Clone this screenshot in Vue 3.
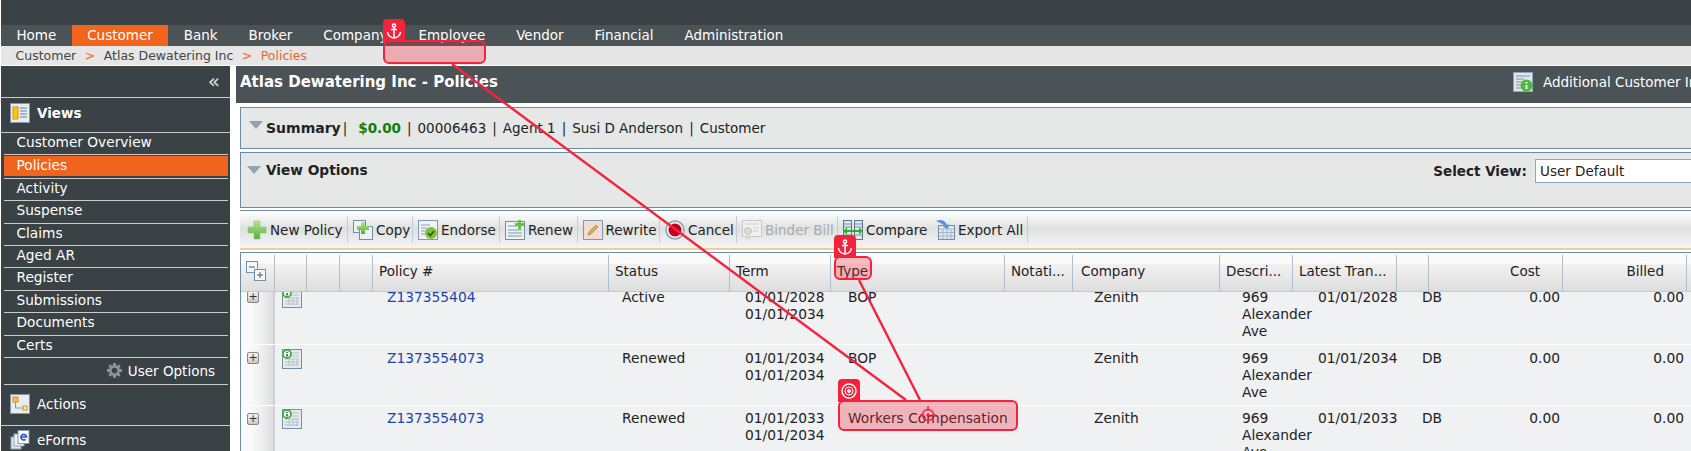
<template>
  <div class="page">
    <svg class="defs" width="0" height="0">
      <defs>
        <linearGradient id="gPlus" x1="0" y1="0" x2="0" y2="1">
          <stop offset="0" stop-color="#b6e58c" />
          <stop offset="1" stop-color="#5aae3c" />
        </linearGradient>
        <symbol id="i-views" viewBox="0 0 20 20">
          <rect x="0.5" y="0.5" width="19" height="19" fill="#e8edf1" stroke="#7d98b0" />
          <rect x="3" y="4" width="5" height="12" fill="#f8c810" stroke="#e88a10" />
          <path d="M10 5h7M10 8h7M10 11h7M10 14h7" stroke="#8ea3b5" stroke-width="1.4" />
        </symbol>
        <symbol id="i-actions" viewBox="0 0 20 20">
          <rect x="0.5" y="0.5" width="19" height="19" fill="#e8edf1" stroke="#7d98b0" />
          <rect x="3" y="3" width="5" height="5" fill="#f4c430" stroke="#d0901a" />
          <rect x="13" y="12" width="4" height="4" fill="#fbe9a8" stroke="#d0901a" />
          <path d="M5.500 8v6h7" fill="none" stroke="#7d98b0" />
        </symbol>
        <symbol id="i-eforms" viewBox="0 0 20 20">
          <rect x="1" y="7" width="10" height="12" fill="#dfe6ec" stroke="#8ea3b5" />
          <rect x="4" y="4" width="10" height="12" fill="#eef2f5" stroke="#8ea3b5" />
          <rect x="8" y="0.500" width="11" height="13" fill="#fff" stroke="#7d98b0" />
          <path d="M11 7h5.500a2.800 2.800 0 1 0-1 2.300" fill="none" stroke="#2a4fd0" stroke-width="1.600" />
        </symbol>
        <symbol id="i-plus" viewBox="0 0 20 20">
          <path d="M7 1h6v6h6v6h-6v6H7v-6H1V7h6z" fill="url(#gPlus)" stroke="#8cc878" stroke-width="0.600" />
        </symbol>
        <symbol id="i-copy" viewBox="0 0 20 20">
          <rect x="0.500" y="0.500" width="12" height="12" fill="#eef2f5" stroke="#6f8fab" />
          <rect x="6.500" y="6.500" width="13" height="13" fill="#eef2f5" stroke="#6f8fab" />
          <path d="M8 2h4v4h4v4h-4v4H8v-4H4V6h4z" fill="url(#gPlus)" />
        </symbol>
        <symbol id="i-endorse" viewBox="0 0 20 20">
          <rect x="0.500" y="0.500" width="19" height="19" fill="#eef2f5" stroke="#7d98b0" />
          <path d="M3 5h9M3 8h6M3 11h4M3 14h4" stroke="#8ea3b5" />
          <circle cx="13" cy="13" r="6" fill="#7fbf3a" />
          <path d="M10 13l2.300 2.500L16 11" fill="none" stroke="#1d5e18" stroke-width="1.500" />
        </symbol>
        <symbol id="i-renew" viewBox="0 0 20 20">
          <rect x="0.500" y="1.500" width="19" height="18" fill="#eef2f5" stroke="#6f8fab" />
          <path d="M3 6h9M3 10h14M3 13h14M3 16h14" stroke="#7d98b0" />
          <path d="M13 0h3v3h3v3h-3v3h-3V6h-3V3h3z" fill="#63c23e" />
        </symbol>
        <symbol id="i-rewrite" viewBox="0 0 20 20">
          <rect x="0.500" y="0.500" width="19" height="19" fill="#f3dcd6" stroke="#7d98b0" />
          <path d="M5 15l1-3 7-7 2 2-7 7z" fill="#d8b060" stroke="#8a6a30" stroke-width="0.600" />
        </symbol>
        <symbol id="i-cancel" viewBox="0 0 20 20">
          <circle cx="10" cy="10" r="9" fill="#eef2f5" stroke="#8ea3b5" stroke-width="1.500" />
          <circle cx="10" cy="10" r="6.500" fill="#c40018" />
        </symbol>
        <symbol id="i-binder" viewBox="0 0 20 20">
          <rect x="0.500" y="0.500" width="19" height="16" fill="#f2f2f2" stroke="#c8c8c8" />
          <path d="M3 4h14M11 8h6M11 11h6" stroke="#d0d0d0" />
          <circle cx="6" cy="11" r="3.500" fill="#dcdcdc" stroke="#c4c4c4" />
          <path d="M4 14v6l2-1.500L8 20v-6" fill="#d8d8d8" />
        </symbol>
        <symbol id="i-compare" viewBox="0 0 20 20">
          <rect x="0.500" y="0.500" width="8" height="19" fill="#dfe6ec" stroke="#56758f" />
          <rect x="11.500" y="0.500" width="8" height="19" fill="#dfe6ec" stroke="#56758f" />
          <path d="M1 4h7M1 7h7M12 4h7M12 7h7M1 15h7M12 15h7" stroke="#7d93a8" />
          <path d="M0 11l4-3.500V10h12V7.500l4 3.500-4 3.500V12H4v2.500z" fill="#30b020" />
        </symbol>
        <symbol id="i-export" viewBox="0 0 20 20">
          <rect x="3.500" y="5.500" width="16" height="14" fill="#dde5ee" stroke="#6f8fab" />
          <path d="M4 9h15M4 12.500h15M4 16h15M8 9v10M12 9v10M16 9v10" stroke="#a7b8c8" />
          <path d="M1 1c4-2 9-1 11 4l2-1-1 5-5-2 2-1C8 3.500 4 2.500 1 1z" fill="#5c8fd8" />
        </symbol>
        <symbol id="i-policy" viewBox="0 0 20 20">
          <rect x="0.500" y="0.500" width="19" height="19" fill="#e8ebee" stroke="#6f8fab" />
          <path d="M9 4h8M9 7h8M3 10h14M3 13h14M3 16h14M7 10v7M11 10v7M15 10v7" stroke="#b6bfc8" />
          <circle cx="5" cy="5" r="4" fill="#fff" stroke="#3cb43c" stroke-width="1.800" />
          <path d="M5 3v1M5 5v2.500" stroke="#1a4a1a" stroke-width="1.400" />
        </symbol>
        <symbol id="i-info" viewBox="0 0 20 20">
          <rect x="0.500" y="0.500" width="19" height="19" fill="#dfe6ec" stroke="#8ea3b5" />
          <path d="M3 4h14M3 7h8M3 10h6M3 13h6M3 16h5" stroke="#7d93a8" />
          <circle cx="13.500" cy="13.500" r="6" fill="#4cb83c" />
          <path d="M13.500 10v1.500M13.500 13v4" stroke="#fff" stroke-width="1.800" />
        </symbol>
        <symbol id="i-expand" viewBox="0 0 20 20">
          <rect x="0.500" y="0.500" width="11" height="11" fill="#f4f6f8" stroke="#6f8fab" />
          <path d="M3 6h6" stroke="#556" />
          <rect x="8.500" y="8.500" width="11" height="11" fill="#f4f6f8" stroke="#6f8fab" />
          <path d="M11 14h6M14 11v6" stroke="#556" />
        </symbol>
        <symbol id="i-gear" viewBox="0 0 16 16">
          <path d="M6.500 0h3v2.500l1.500.6L12.700 1.400l2 2L13 5l.6 1.500H16v3h-2.400L13 11l1.700 1.600-2 2L11 13l-1.500.6V16h-3v-2.400L5 13l-1.700 1.600-2-2L3 11l-.6-1.500H0v-3h2.400L3 5 1.300 3.400l2-2L5 3.100l1.500-.6z" fill="#8d9496" />
          <circle cx="8" cy="8" r="3" fill="#3a4245" />
        </symbol>
        <symbol id="anchor" viewBox="0 0 16 16">
          <g fill="none" stroke="#fff" stroke-width="1.500">
            <circle cx="8" cy="2.600" r="1.600" />
            <path d="M8 4.200V15M5 6.500h6M1.500 9c.5 3.500 3 5.500 6.500 6 3.500-.5 6-2.500 6.500-6" />
          </g>
        </symbol>
      </defs>
    </svg>

    <div class="topbar"></div>
    <nav class="nav">
      <a v-for="item in navItems" :key="item" class="nav-item" :class="{ active: item === 'Customer' }">{{ item }}</a>
    </nav>
    <div class="crumbs">
      <span>Customer</span><span class="sep">&gt;</span><span>Atlas Dewatering Inc</span><span class="sep">&gt;</span><span class="current">Policies</span>
    </div>

    <div class="layout">
      <aside class="sidebar">
        <div class="collapse">«</div>
        <div class="section views">
          <svg class="ico20"><use href="#i-views" /></svg>
          <b>Views</b>
        </div>
        <ul class="menu">
          <li v-for="item in menuItems" :key="item" :class="{ active: item === 'Policies' }"><span>{{ item }}</span></li>
        </ul>
        <div class="user-options">
          <svg class="gear"><use href="#i-gear" /></svg>
          User Options
        </div>
        <div class="section actions">
          <svg class="ico20"><use href="#i-actions" /></svg>
          <span>Actions</span>
        </div>
        <div class="section eforms">
          <svg class="ico20"><use href="#i-eforms" /></svg>
          <span>eForms</span>
        </div>
      </aside>

      <main class="main">
        <header class="title-bar">
          <h1>Atlas Dewatering Inc - Policies</h1>
          <div class="additional">
            <svg class="ico20"><use href="#i-info" /></svg>
            <span>Additional Customer Information</span>
          </div>
        </header>

        <section class="panel summary">
          <span class="tri"></span>
          <b class="summary-label">Summary</b>
          <span class="bar first-bar">|</span>
          <b class="money">$0.00</b>
          <span class="bar">|</span>
          <span>00006463</span>
          <span class="bar">|</span>
          <span>Agent 1</span>
          <span class="bar">|</span>
          <span>Susi D Anderson</span>
          <span class="bar">|</span>
          <span>Customer</span>
        </section>

        <section class="panel options">
          <div class="options-left">
            <span class="tri"></span>
            <b>View Options</b>
          </div>
          <div class="select-view">
            <b>Select View:</b>
            <div class="select-box">User Default</div>
          </div>
        </section>

        <div class="toolbar">
          <div v-for="tool in tools" :key="tool.label" class="tool" :class="{ disabled: tool.disabled }">
            <svg class="ico20"><use :href="'#i-' + tool.icon" /></svg>
            <span>{{ tool.label }}</span>
          </div>
        </div>

        <div class="grid">
          <div class="grid-head grid-cols">
            <div v-for="(col, i) in columns" :key="i" class="hcell" :class="col.cls">
              <svg v-if="i === 0" class="expand"><use href="#i-expand" /></svg>
              {{ col.label }}
            </div>
          </div>
          <div class="grid-body">
            <div v-for="row in rows" :key="row.term1" class="grid-row grid-cols">
              <div class="cell first"><span class="plus-box">+</span></div>
              <div class="cell"><svg class="ico20 doc"><use href="#i-policy" /></svg></div>
              <div class="cell"></div>
              <div class="cell"></div>
              <div class="cell policy"><a>{{ row.policy }}</a></div>
              <div class="cell status">{{ row.status }}</div>
              <div class="cell term">{{ row.term1 }}<br />{{ row.term2 }}</div>
              <div class="cell type">{{ row.type }}</div>
              <div class="cell"></div>
              <div class="cell company">Zenith</div>
              <div class="cell desc">969<br />Alexander<br />Ave</div>
              <div class="cell latest">{{ row.latest }}</div>
              <div class="cell db">DB</div>
              <div class="cell num">0.00</div>
              <div class="cell num">0.00</div>
              <div class="cell"></div>
            </div>
          </div>
        </div>
      </main>
    </div>

    <!-- red annotation layer on top of the page -->
    <svg class="lines" width="1691" height="451">
      <path d="M452 64L906 400M859 280L920 400" stroke="#f4233c" stroke-width="2.400" fill="none" />
    </svg>
    <div class="mark mark-a"><span class="flag"><svg width="16" height="16"><use href="#anchor" /></svg></span></div>
    <div class="mark mark-b"><span class="flag"><svg width="16" height="16"><use href="#anchor" /></svg></span></div>
    <div class="mark mark-c">
      <span class="flag">
        <svg width="16" height="16" viewBox="0 0 16 16" fill="none" stroke="#fff">
          <circle cx="8" cy="8" r="7" stroke-width="1.400" />
          <circle cx="8" cy="8" r="4" />
          <circle cx="8" cy="8" r="1.500" fill="#fff" />
        </svg>
      </span>
      <svg class="cross" width="16" height="20" viewBox="0 0 16 20" fill="none" stroke="#f4233c" stroke-width="1.400">
        <circle cx="8" cy="10" r="5.500" />
        <path d="M8 1v5M8 14v5M0 10h4M12 10h4" />
        <circle cx="8" cy="10" r="1" fill="#f4233c" />
      </svg>
    </div>
  </div>
</template>

<script setup>
const navItems = ['Home', 'Customer', 'Bank', 'Broker', 'Company', 'Employee', 'Vendor', 'Financial', 'Administration']

const menuItems = ['Customer Overview', 'Policies', 'Activity', 'Suspense', 'Claims', 'Aged AR', 'Register', 'Submissions', 'Documents', 'Certs']

const tools = [
  { label: 'New Policy', icon: 'plus' },
  { label: 'Copy', icon: 'copy' },
  { label: 'Endorse', icon: 'endorse' },
  { label: 'Renew', icon: 'renew' },
  { label: 'Rewrite', icon: 'rewrite' },
  { label: 'Cancel', icon: 'cancel' },
  { label: 'Binder Bill', icon: 'binder', disabled: true },
  { label: 'Compare', icon: 'compare' },
  { label: 'Export All', icon: 'export' }
]

const columns = [
  { label: '', cls: 'expand-cell' },
  { label: '' },
  { label: '' },
  { label: '' },
  { label: 'Policy #' },
  { label: 'Status' },
  { label: 'Term' },
  { label: 'Type' },
  { label: 'Notati...' },
  { label: 'Company', cls: 'wide-pad' },
  { label: 'Descri...' },
  { label: 'Latest Tran...' },
  { label: '' },
  { label: 'Cost', cls: 'right' },
  { label: 'Billed', cls: 'right' },
  { label: '' }
]

const rows = [
  { policy: 'Z137355404', status: 'Active', term1: '01/01/2028', term2: '01/01/2034', type: 'BOP', latest: '01/01/2028' },
  { policy: 'Z1373554073', status: 'Renewed', term1: '01/01/2034', term2: '01/01/2034', type: 'BOP', latest: '01/01/2034' },
  { policy: 'Z1373554073', status: 'Renewed', term1: '01/01/2033', term2: '01/01/2034', type: 'Workers Compensation', latest: '01/01/2033' }
]
</script>

<style>
html, body {
  margin: 0;
  background: #fff;
  overflow: hidden;
}
</style>

<style scoped>
* {
  box-sizing: border-box;
}

.page {
  position: relative;
  width: 1691px;
  height: 451px;
  overflow: hidden;
  font-family: "DejaVu Sans", sans-serif;
  font-size: 13.500px;
  color: #222;
  background: #fff;
  padding-left: 1px;
}

.defs {
  position: absolute;
}

.ico20 {
  width: 20px;
  height: 20px;
  flex: none;
}

.topbar {
  height: 25px;
  background: #3a4245;
}

.nav {
  display: flex;
  height: 21px;
  background: #4b5356;
  align-items: center;
}

.nav-item {
  height: 100%;
  padding: 0 15.450px;
  line-height: 21px;
  color: #fff;
}

.nav-item.active {
  background: #f0641e;
}

.crumbs {
  display: flex;
  height: 19px;
  margin-bottom: 1px;
  padding-left: 14.500px;
  align-items: center;
  background: #e6e6e6;
  color: #444;
  font-size: 12.500px;
}

.crumbs .sep {
  margin: 0 8.500px;
  color: #f0641e;
}

.crumbs .current {
  color: #f0641e;
}

.layout {
  display: flex;
  height: 385px;
}

.sidebar {
  flex: none;
  width: 229px;
  background: #3a4245;
  color: #fff;
}

.collapse {
  height: 32px;
  padding-right: 10px;
  border-bottom: 1px solid #ccc;
  text-align: right;
  font-size: 20px;
  line-height: 30px;
  color: #ddd;
}

.section {
  display: flex;
  align-items: center;
  gap: 7px;
  height: 34px;
  padding-left: 9px;
}

.section.views {
  padding-bottom: 4px;
}

.menu {
  margin: 0;
  padding: 0;
  list-style: none;
  border-top: 1px solid #ccc;
  font-size: 13.700px;
}

.menu li {
  height: 22.400px;
  margin: 0 2px 0 3px;
  border-bottom: 1px solid #ccc;
}

.menu li span {
  display: block;
  height: 19px;
  padding-left: 12.500px;
  line-height: 19px;
}

.menu li.active span {
  height: 20px;
  margin-top: 1px;
  background: #f0641e;
}

.user-options {
  display: flex;
  justify-content: flex-end;
  align-items: center;
  gap: 5px;
  height: 27px;
  margin: 0 2px 0 3px;
  padding-right: 13px;
  border-bottom: 1px solid #ccc;
}

.gear {
  width: 15px;
  height: 15px;
  margin-right: 1px;
}

.actions {
  height: 41px;
  padding-bottom: 2px;
  border-bottom: 1px solid #ccc;
}

.eforms {
  height: 28px;
}

.main {
  flex: 1;
  min-width: 0;
  margin-left: 6px;
}

.title-bar {
  display: flex;
  justify-content: space-between;
  align-items: center;
  height: 37px;
  padding: 0 0 6px 4px;
  background: #4b5356;
  color: #fff;
  white-space: nowrap;
}

.title-bar h1 {
  margin: 0;
  font-size: 15px;
  font-weight: 700;
}

.additional {
  display: flex;
  align-items: center;
  gap: 10px;
  margin-right: -72px;
}

.panel {
  margin: 4px -20px 0 4px;
  border: 1px solid #6e8ba6;
  background: #e6e7e7;
}

.summary {
  display: flex;
  align-items: center;
  height: 42px;
  padding-left: 8px;
}

.tri {
  display: inline-block;
  width: 0;
  height: 0;
  border-left: 7px solid transparent;
  border-right: 7px solid transparent;
  border-top: 8px solid #8ea3b5;
}

.summary .tri {
  margin-bottom: 6px;
}

.summary-label {
  margin-left: 3px;
  font-size: 14px;
}

.bar {
  margin: 0 6px;
}

.first-bar {
  margin-left: 2px;
}

.money {
  margin-left: 5px;
  color: #0c800c;
}

.options {
  display: flex;
  justify-content: space-between;
  height: 56px;
  margin-top: 3px;
  padding-left: 6px;
}

.options-left {
  display: flex;
  align-items: center;
  gap: 5px;
  height: 34px;
}

.options-left b {
  font-size: 13.700px;
}

.select-view {
  display: flex;
  align-items: center;
  gap: 8px;
  height: 36px;
  margin-right: -125px;
}

.select-box {
  width: 300px;
  height: 24px;
  padding-left: 4px;
  line-height: 22px;
  border: 1px solid #8fa5b8;
  background: #fff;
}

.toolbar {
  display: grid;
  grid-template-columns: 104px 65px 87px 77.500px 82.500px 77px 101px 92px 98px;
  height: 40px;
  margin: 2px -20px 0 4px;
  padding: 5px 0 5px 4px;
  border-top: 1px solid #6e8ba6;
  border-bottom: 2px solid #efcf95;
  background: linear-gradient(#fff, #dfe1e1 48%, #f4f4f4);
}

.tool {
  display: flex;
  align-items: center;
  gap: 3px;
  padding-left: 5px;
  border-right: 1px solid #c5ced6;
  white-space: nowrap;
}

.tool:first-child {
  padding-left: 3px;
}

.tool:nth-child(8) {
  border-right: none;
}

.tool.disabled {
  color: #aaa;
}

.grid {
  position: relative;
  isolation: isolate;
  margin: 2px -20px 0 4px;
  border-left: 1px solid #6e8ba6;
  border-top: 1px solid #6e8ba6;
  height: 200px;
  overflow: hidden;
}

.grid-cols {
  display: grid;
  grid-template-columns: 34px 32px 33px 33px 236px 121px 101px 174px 68px 147px 73px 104px 32px 134px 124px 40px;
}

.grid-head {
  position: relative;
  z-index: 1;
  height: 39px;
  background: linear-gradient(#fbfbfb 25%, #f1f1f1 30%, #dedede);
  border-bottom: 1px solid #c4c8cc;
  white-space: nowrap;
}

.hcell {
  display: flex;
  align-items: center;
  margin-top: 2px;
  padding: 0 0 5px 6px;
  border-right: 1px solid #aebfce;
  overflow: hidden;
}

.hcell.right {
  justify-content: flex-end;
  padding-right: 22px;
}

.hcell.wide-pad {
  padding-left: 8px;
}

.expand {
  width: 20px;
  height: 20px;
  margin-left: -1px;
}

.grid-body {
  margin-top: -8px;
}

.grid-row {
  height: 61px;
  border-bottom: 1px solid #fff;
  background: #f0f1f3;
}

.cell {
  padding-top: 4.500px;
  font-size: 13.800px;
  line-height: 17px;
  white-space: nowrap;
}

.grid-row:last-child .cell:not(.first) {
  padding-top: 3.500px;
}

.cell.first {
  display: flex;
  justify-content: flex-start;
  padding: 7px 0 0 6px;
  background: linear-gradient(90deg, #fafafa 30%, #f4f4f4 50%, #dedfe0);
  border-right: 2px solid #cdd0d3;
}

.plus-box {
  width: 12px;
  height: 12px;
  border: 1px solid #888;
  border-radius: 2px;
  background: linear-gradient(#f4f4f4, #c8c8c8);
  font-size: 11px;
  line-height: 9px;
  text-align: center;
  color: #333;
}

.doc {
  display: block;
  margin: -0.500px 0 0 7px;
}

.policy {
  padding-left: 14px;
}

.policy a {
  color: #1a45a8;
}

.status {
  padding-left: 13px;
}

.term {
  padding-left: 15px;
}

.type {
  padding-left: 17px;
}

.company {
  padding-left: 21px;
}

.desc {
  padding-left: 22px;
}

.latest {
  padding-left: 25px;
}

.db {
  padding-left: 25px;
}

.num {
  padding-right: 3px;
  text-align: right;
}

.mark {
  position: absolute;
  border: 2.500px solid #f4233c;
  border-radius: 6px;
  background: rgba(240, 40, 60, 0.3);
}

.flag {
  position: absolute;
  left: -2.500px;
  bottom: 100%;
  display: flex;
  align-items: center;
  justify-content: center;
  width: 22px;
  height: 23px;
  border-radius: 4px 4px 0 0;
  background: #f4233c;
}

.mark-a {
  left: 383px;
  top: 40px;
  width: 103px;
  height: 24px;
}

.mark-b {
  left: 834px;
  top: 256px;
  width: 38px;
  height: 24px;
}

.mark-c {
  left: 838px;
  top: 400px;
  width: 180px;
  height: 31px;
}

.cross {
  position: absolute;
  left: 80px;
  top: 3px;
}

.lines {
  position: absolute;
  left: 0;
  top: 0;
  pointer-events: none;
}
</style>
